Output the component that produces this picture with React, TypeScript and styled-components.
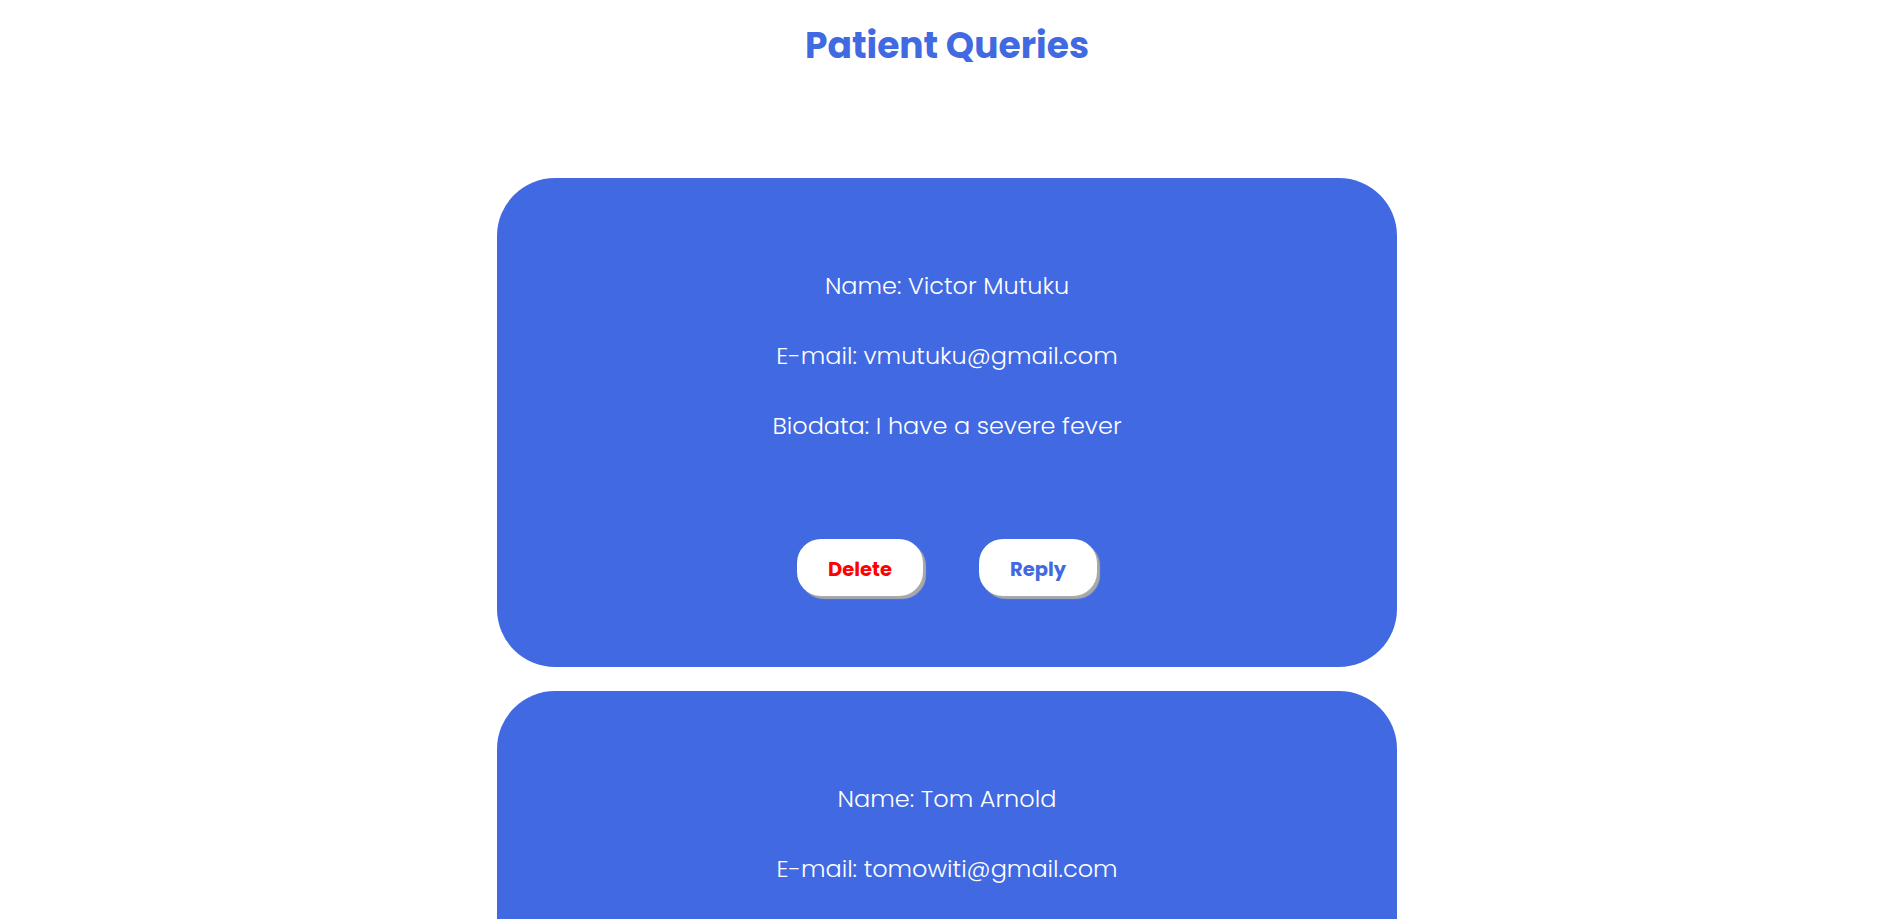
import React from "react";
import styled, { createGlobalStyle } from "styled-components";

const GlobalStyle = createGlobalStyle`
  html, body {
    margin: 0;
    padding: 0;
    background: #ffffff;
  }
  body {
    font-family: "Poppins", "Inter", "Noto Sans", sans-serif;
  }
  * { box-sizing: border-box; }
`;

const Page = styled.div`
  display: flex;
  flex-direction: column;
  align-items: center;
  padding: 26px 0 40px 4px;
`;

const Title = styled.h1`
  margin: 0;
  font-family: "Poppins", "Inter", sans-serif;
  font-size: 36px;
  line-height: 40px;
  font-weight: 700;
  color: #4169e1;
`;

const List = styled.div`
  display: flex;
  flex-direction: column;
  gap: 24px;
  margin-top: 112px;
`;

const Card = styled.section`
  width: 900px;
  background: #4169e1;
  border-radius: 58px;
  padding: 90px 0 71px;
  display: flex;
  flex-direction: column;
  align-items: center;
`;

const Info = styled.div`
  display: flex;
  flex-direction: column;
  align-items: center;
  gap: 34px;
`;

const Line = styled.p`
  margin: 0;
  font-family: "Poppins", "Inter", sans-serif;
  font-size: 24px;
  line-height: 36px;
  font-weight: 300;
  color: #ffffff;
`;

const Actions = styled.div`
  display: flex;
  justify-content: center;
  gap: 56px;
  margin-top: 95px;
`;

const ActionButton = styled.button<{ $variant: "danger" | "primary" }>`
  height: 57px;
  padding: 3px 31px 0;
  border: none;
  border-radius: 24px;
  background: #ffffff;
  box-shadow: 3px 3px 1px #a9a9a9;
  font-family: "Poppins", "Inter", sans-serif;
  font-size: 19.5px;
  font-weight: 700;
  color: ${(p) => (p.$variant === "danger" ? "#ff0000" : "#4169e1")};
  cursor: pointer;
`;

type Query = { name: string; email: string; bio: string };

const queries: Query[] = [
  { name: "Victor Mutuku", email: "vmutuku@gmail.com", bio: "I have a severe fever" },
  { name: "Tom Arnold", email: "tomowiti@gmail.com", bio: "I have a persistent cough" },
];

export default function App() {
  return (
    <>
      <GlobalStyle />
      <Page>
        <Title>Patient Queries</Title>
        <List>
          {queries.map((q) => (
            <Card key={q.email}>
              <Info>
                <Line>Name: {q.name}</Line>
                <Line>E-mail: {q.email}</Line>
                <Line>Biodata: {q.bio}</Line>
              </Info>
              <Actions>
                <ActionButton $variant="danger">Delete</ActionButton>
                <ActionButton $variant="primary">Reply</ActionButton>
              </Actions>
            </Card>
          ))}
        </List>
      </Page>
    </>
  );
}
